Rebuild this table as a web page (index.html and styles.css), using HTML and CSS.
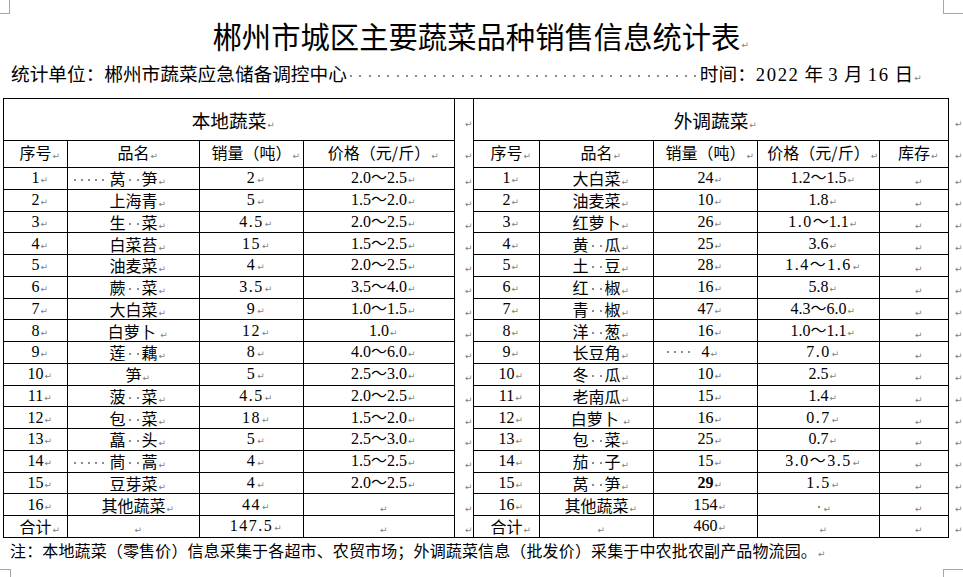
FILE: index.html
```html
<!DOCTYPE html>
<html lang="zh-CN">
<head>
<meta charset="utf-8">
<title>郴州市城区主要蔬菜品种销售信息统计表</title>
<link rel="stylesheet" href="styles.css">
</head>
<body>
<div class="page">
  <span class="corner tl"></span>
  <span class="corner tr"></span>
  <span class="corner bl"></span>
  <span class="corner br"></span>

  <h1 class="title">郴州市城区主要蔬菜品种销售信息统计表<i class="m"></i></h1>
  <p class="unit">统计单位：郴州市蔬菜应急储备调控中心<span class="leader"></span>时间：<span class="num">2022</span><span class="sp"></span>年<span class="sp"></span><span class="num">3</span><span class="sp"></span>月<span class="sp"></span><span class="num">16</span><span class="sp"></span>日<i class="m"></i></p>

  <table class="sheet">
    <colgroup>
      <col class="c1"><col class="c2"><col class="c3"><col class="c4">
      <col class="cg">
      <col class="c5"><col class="c6"><col class="c7"><col class="c8"><col class="c9">
      <col class="ce">
    </colgroup>
    <tr class="r-head">
      <td colspan="4" class="sect">本地蔬菜<i class="m"></i></td>
      <td class="gap top"><i class="m"></i></td>
      <td colspan="5" class="sect">外调蔬菜<i class="m"></i></td>
      <td class="eor"><i class="m"></i></td>
    </tr>
    <tr class="r-sub">
      <td>序号<i class="m"></i></td><td>品名<i class="m"></i></td><td>销量（吨）<i class="m"></i></td><td>价格（元/斤）<i class="m"></i></td>
      <td class="gap"><i class="m"></i></td>
      <td>序号<i class="m"></i></td><td>品名<i class="m"></i></td><td>销量（吨）<i class="m"></i></td><td>价格（元/斤）<i class="m"></i></td><td>库存<i class="m"></i></td>
      <td class="eor"><i class="m"></i></td>
    </tr>
    <tr>
      <td class="n">1<i class="m"></i></td><td><span class="pre"></span>莴<i class="d"></i><i class="d"></i>笋<i class="m"></i></td><td class="s">2<i class="m"></i></td><td class="n">2.0～2.5<i class="m"></i></td>
      <td class="gap"><i class="m"></i></td>
      <td class="n">1<i class="m"></i></td><td>大白菜<i class="m"></i></td><td class="n">24<i class="m"></i></td><td class="n">1.2～1.5<i class="m"></i></td><td><i class="m"></i></td>
      <td class="eor"><i class="m"></i></td>
    </tr>
    <tr>
      <td class="n">2<i class="m"></i></td><td>上海青<i class="m"></i></td><td class="s">5<i class="m"></i></td><td class="n">1.5～2.0<i class="m"></i></td>
      <td class="gap"><i class="m"></i></td>
      <td class="n">2<i class="m"></i></td><td>油麦菜<i class="m"></i></td><td class="n">10<i class="m"></i></td><td class="n">1.8<i class="m"></i></td><td><i class="m"></i></td>
      <td class="eor"><i class="m"></i></td>
    </tr>
    <tr>
      <td class="n">3<i class="m"></i></td><td>生<i class="d"></i><i class="d"></i>菜<i class="m"></i></td><td class="s">4.5<i class="m"></i></td><td class="n">2.0～2.5<i class="m"></i></td>
      <td class="gap"><i class="m"></i></td>
      <td class="n">3<i class="m"></i></td><td>红萝卜<i class="m"></i></td><td class="n">26<i class="m"></i></td><td class="n"><span class="s">1.0</span>～1.1<i class="m"></i></td><td><i class="m"></i></td>
      <td class="eor"><i class="m"></i></td>
    </tr>
    <tr>
      <td class="n">4<i class="m"></i></td><td>白菜苔<i class="m"></i></td><td class="s">15<i class="m"></i></td><td class="n">1.5～2.5<i class="m"></i></td>
      <td class="gap"><i class="m"></i></td>
      <td class="n">4<i class="m"></i></td><td>黄<i class="d"></i><i class="d"></i>瓜<i class="m"></i></td><td class="n">25<i class="m"></i></td><td class="n">3.6<i class="m"></i></td><td><i class="m"></i></td>
      <td class="eor"><i class="m"></i></td>
    </tr>
    <tr>
      <td class="n">5<i class="m"></i></td><td>油麦菜<i class="m"></i></td><td class="s">4<i class="m"></i></td><td class="n">2.0～2.5<i class="m"></i></td>
      <td class="gap"><i class="m"></i></td>
      <td class="n">5<i class="m"></i></td><td>土<i class="d"></i><i class="d"></i>豆<i class="m"></i></td><td class="n">28<i class="m"></i></td><td class="s">1.4～1.6<i class="m"></i></td><td><i class="m"></i></td>
      <td class="eor"><i class="m"></i></td>
    </tr>
    <tr>
      <td class="n">6<i class="m"></i></td><td>蕨<i class="d"></i><i class="d"></i>菜<i class="m"></i></td><td class="s">3.5<i class="m"></i></td><td class="n">3.5～4.0<i class="m"></i></td>
      <td class="gap"><i class="m"></i></td>
      <td class="n">6<i class="m"></i></td><td>红<i class="d"></i><i class="d"></i>椒<i class="m"></i></td><td class="n">16<i class="m"></i></td><td class="n">5.8<i class="m"></i></td><td><i class="m"></i></td>
      <td class="eor"><i class="m"></i></td>
    </tr>
    <tr>
      <td class="n">7<i class="m"></i></td><td>大白菜<i class="m"></i></td><td class="s">9<i class="m"></i></td><td class="n">1.0～1.5<i class="m"></i></td>
      <td class="gap"><i class="m"></i></td>
      <td class="n">7<i class="m"></i></td><td>青<i class="d"></i><i class="d"></i>椒<i class="m"></i></td><td class="n">47<i class="m"></i></td><td class="n">4.3～6.0<i class="m"></i></td><td><i class="m"></i></td>
      <td class="eor"><i class="m"></i></td>
    </tr>
    <tr>
      <td class="n">8<i class="m"></i></td><td>白萝卜 <i class="m"></i></td><td class="s">12<i class="m"></i></td><td class="n">1.0<i class="m"></i></td>
      <td class="gap"><i class="m"></i></td>
      <td class="n">8<i class="m"></i></td><td>洋<i class="d"></i><i class="d"></i>葱<i class="m"></i></td><td class="n">16<i class="m"></i></td><td class="n">1.0～1.1<i class="m"></i></td><td><i class="m"></i></td>
      <td class="eor"><i class="m"></i></td>
    </tr>
    <tr>
      <td class="n">9<i class="m"></i></td><td>莲<i class="d"></i><i class="d"></i>藕<i class="m"></i></td><td class="s">8<i class="m"></i></td><td class="n">4.0～6.0<i class="m"></i></td>
      <td class="gap"><i class="m"></i></td>
      <td class="n">9<i class="m"></i></td><td>长豆角<i class="m"></i></td><td class="n"><span class="pre pre-num"></span>4<i class="m"></i></td><td class="s">7.0<i class="m"></i></td><td><i class="m"></i></td>
      <td class="eor"><i class="m"></i></td>
    </tr>
    <tr>
      <td class="n">10<i class="m"></i></td><td>笋<i class="m"></i></td><td class="s">5<i class="m"></i></td><td class="n">2.5～3.0<i class="m"></i></td>
      <td class="gap"><i class="m"></i></td>
      <td class="n">10<i class="m"></i></td><td>冬<i class="d"></i><i class="d"></i>瓜<i class="m"></i></td><td class="n">10<i class="m"></i></td><td class="n">2.5<i class="m"></i></td><td><i class="m"></i></td>
      <td class="eor"><i class="m"></i></td>
    </tr>
    <tr>
      <td class="n">11<i class="m"></i></td><td>菠<i class="d"></i><i class="d"></i>菜<i class="m"></i></td><td class="s">4.5<i class="m"></i></td><td class="n">2.0～2.5<i class="m"></i></td>
      <td class="gap"><i class="m"></i></td>
      <td class="n">11<i class="m"></i></td><td>老南瓜<i class="m"></i></td><td class="n">15<i class="m"></i></td><td class="n">1.4<i class="m"></i></td><td><i class="m"></i></td>
      <td class="eor"><i class="m"></i></td>
    </tr>
    <tr>
      <td class="n">12<i class="m"></i></td><td>包<i class="d"></i><i class="d"></i>菜<i class="m"></i></td><td class="s">18<i class="m"></i></td><td class="n">1.5～2.0<i class="m"></i></td>
      <td class="gap"><i class="m"></i></td>
      <td class="n">12<i class="m"></i></td><td>白萝卜 <i class="m"></i></td><td class="n">16<i class="m"></i></td><td class="s">0.7<i class="m"></i></td><td><i class="m"></i></td>
      <td class="eor"><i class="m"></i></td>
    </tr>
    <tr>
      <td class="n">13<i class="m"></i></td><td>藠<i class="d"></i><i class="d"></i>头<i class="m"></i></td><td class="s">5<i class="m"></i></td><td class="n">2.5～3.0<i class="m"></i></td>
      <td class="gap"><i class="m"></i></td>
      <td class="n">13<i class="m"></i></td><td>包<i class="d"></i><i class="d"></i>菜<i class="m"></i></td><td class="n">25<i class="m"></i></td><td class="n">0.7<i class="m"></i></td><td><i class="m"></i></td>
      <td class="eor"><i class="m"></i></td>
    </tr>
    <tr>
      <td class="n">14<i class="m"></i></td><td><span class="pre"></span>茼<i class="d"></i><i class="d"></i>蒿<i class="m"></i></td><td class="s">4<i class="m"></i></td><td class="n">1.5～2.5<i class="m"></i></td>
      <td class="gap"><i class="m"></i></td>
      <td class="n">14<i class="m"></i></td><td>茄<i class="d"></i><i class="d"></i>子<i class="m"></i></td><td class="n">15<i class="m"></i></td><td class="s">3.0～3.5<i class="m"></i></td><td><i class="m"></i></td>
      <td class="eor"><i class="m"></i></td>
    </tr>
    <tr>
      <td class="n">15<i class="m"></i></td><td>豆芽菜<i class="m"></i></td><td class="s">4<i class="m"></i></td><td class="n">2.0～2.5<i class="m"></i></td>
      <td class="gap"><i class="m"></i></td>
      <td class="n">15<i class="m"></i></td><td>莴<i class="d"></i><i class="d"></i>笋<i class="m"></i></td><td class="n b">29<i class="m"></i></td><td class="s">1.5<i class="m"></i></td><td><i class="m"></i></td>
      <td class="eor"><i class="m"></i></td>
    </tr>
    <tr>
      <td class="n">16<i class="m"></i></td><td>其他蔬菜<i class="m"></i></td><td class="s">44<i class="m"></i></td><td><i class="m"></i></td>
      <td class="gap"><i class="m"></i></td>
      <td class="n">16<i class="m"></i></td><td>其他蔬菜<i class="m"></i></td><td class="n">154<i class="m"></i></td><td><i class="d"></i><i class="m"></i></td><td><i class="m"></i></td>
      <td class="eor"><i class="m"></i></td>
    </tr>
    <tr>
      <td>合计<i class="m"></i></td><td><i class="m"></i></td><td class="s">147.5<i class="m"></i></td><td><i class="m"></i></td>
      <td class="gap bottom"><i class="m"></i></td>
      <td>合计<i class="m"></i></td><td><i class="m"></i></td><td class="n">460<i class="m"></i></td><td><i class="m"></i></td><td><i class="m"></i></td>
      <td class="eor"><i class="m"></i></td>
    </tr>
  </table>

  <p class="note">注：本地蔬菜（零售价）信息采集于各超市、农贸市场；外调蔬菜信息（批发价）采集于中农批农副产品物流园。<i class="m"></i></p>
</div>
</body>
</html>
```

FILE: styles.css
```css
html, body {
  margin: 0;
  padding: 0;
  background: #fff;
}

.page {
  position: relative;
  width: 963px;
  height: 577px;
  overflow: hidden;
  font-family: "Noto Sans CJK SC", sans-serif;
  color: #000;
}

/* page corner crop marks */
.corner {
  position: absolute;
  width: 20px;
  height: 14px;
  border-color: #a6a6a6;
  border-style: solid;
  border-width: 0;
}
.corner.tl { left: -11px; top: -1px; border-right-width: 1px; border-bottom-width: 1px; }
.corner.tr { left: 943px; top: -1px; border-left-width: 1px; border-bottom-width: 1px; }
.corner.bl { left: -10px; top: 569px; border-right-width: 1px; border-top-width: 1px; }
.corner.br { left: 943px; top: 569px; border-left-width: 1px; border-top-width: 1px; }

/* paragraph marks */
.m {
  display: inline-block;
  width: 0;
  height: 0;
  line-height: 0;
  vertical-align: baseline;
  white-space: nowrap;
  font-style: normal;
}
.m::after {
  content: "\21B5";
  font-family: "DejaVu Sans", sans-serif;
  font-size: 9px;
  line-height: 0;
  font-weight: normal;
  letter-spacing: 0;
  color: #7f7f7f;
  padding-left: 1px;
}

/* visible spaces */
.d {
  display: inline-block;
  width: 8px;
  height: 6px;
  vertical-align: 2px;
  background: linear-gradient(#8c8c8c, #8c8c8c) center / 2px 2px no-repeat;
}
.pre {
  display: inline-block;
  width: 35px;
  height: 2px;
  margin-left: -38px;
  margin-right: 3px;
  vertical-align: 4px;
  background: repeating-linear-gradient(to right, transparent 0 3px, #8c8c8c 3px 5px, transparent 5px 7px);
}
.pre-num {
  width: 30px;
  margin-left: -38px;
  margin-right: 8px;
}

.title {
  margin: 20px 0 0;
  padding-right: 10px;
  font-size: 29.33px;
  line-height: 30px;
  font-weight: normal;
  text-align: center;
}

.unit {
  margin: 13px 0 0;
  padding-left: 11px;
  font-size: 18.67px;
  line-height: 20px;
  white-space: nowrap;
}
.unit .num {
  font-family: "Liberation Serif", serif;
  letter-spacing: 1.6px;
}
.unit .sp {
  display: inline-block;
  width: 5px;
}
.leader {
  display: inline-block;
  width: 353px;
  height: 2px;
  vertical-align: 4px;
  background: repeating-linear-gradient(to right, #8c8c8c 0 2px, transparent 2px 9.3px);
  background-position: 3px 0;
}

/* table */
.sheet {
  margin: 13px 0 0 3px;
  border-collapse: collapse;
  table-layout: fixed;
  width: 961px;
  font-size: 16px;
}
.c1 { width: 64px; }
.c2 { width: 132px; }
.c3 { width: 104px; }
.c4 { width: 151px; }
.cg { width: 19px; }
.c5 { width: 66px; }
.c6 { width: 114px; }
.c7 { width: 104px; }
.c8 { width: 122px; }
.c9 { width: 69px; }
.ce { width: 15px; }

.sheet td {
  border: 1px solid #000;
  padding: 0;
  text-align: center;
  vertical-align: middle;
  white-space: nowrap;
  line-height: 16px;
}
.sheet tr { height: 21.76px; }
.sheet .r-head { height: 42px; }
.sheet .r-sub { height: 27px; }
.sheet .r-sub td { padding-bottom: 5px; }

.sheet td.sect {
  font-size: 18.67px;
  line-height: 20px;
}
.sheet td.gap {
  border-top: 0 none;
  border-bottom: 0 none;
}
.sheet td.gap.top { border-top: 1px solid #000; }
.sheet td.gap.bottom { border-bottom: 1px solid #000; }
.sheet td.eor {
  border: 0 none;
  text-align: left;
  padding-left: 5px;
}

.n {
  font-family: "Liberation Serif", "Noto Sans CJK SC", serif;
}
.s {
  font-family: "Liberation Serif", "Noto Sans CJK SC", serif;
  letter-spacing: 1.5px;
}
.b { font-weight: bold; }

.note {
  margin: 3px 0 0;
  padding-left: 10px;
  font-size: 16px;
  line-height: 18px;
  letter-spacing: 0.14px;
  white-space: nowrap;
}
```
